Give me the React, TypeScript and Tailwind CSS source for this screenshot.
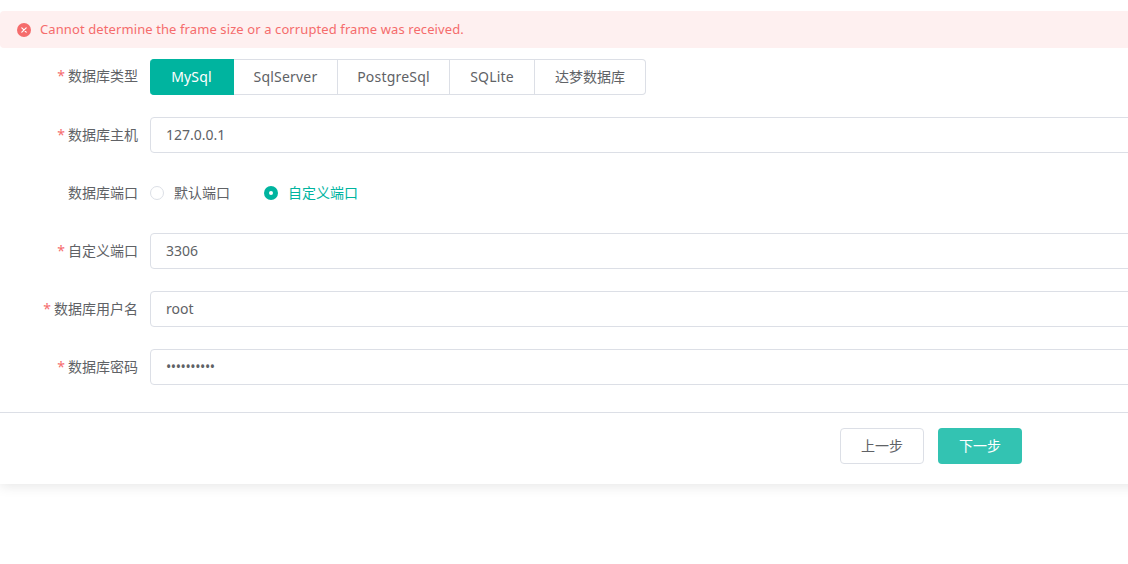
import { useState } from "react"

const font = "font-['Noto_Sans','Noto_Sans_CJK_SC',sans-serif]"
const dbTypes = [
  { name: "MySql", width: "w-[84px]" },
  { name: "SqlServer", width: "w-[104px]" },
  { name: "PostgreSql", width: "w-[112px]" },
  { name: "SQLite", width: "w-[85px]" },
  { name: "达梦数据库", width: "w-[111px]" },
]

const Field = ({ label, required = true, labelClass = "", children }: { label: string; required?: boolean; labelClass?: string; children: React.ReactNode }) => (
  <div className="flex items-center h-9 mb-[22px]">
    <label className={`w-[138px] shrink-0 text-right text-sm text-[#606266] ${labelClass}`}>
      {required && <span className="text-[#f56c6c] mr-[3px]">*</span>}
      {label}
    </label>
    <div className="flex-1 ml-3 flex items-center">{children}</div>
  </div>
)

const TextInput = ({ value, type = "text" }: { value: string; type?: string }) => (
  <input
    type={type}
    defaultValue={value}
    className={`w-full h-9 px-[15px] pb-px text-sm text-[#606266] bg-white border border-[#dcdfe6] rounded outline-none ${type === "password" ? "tracking-[-0.4px]" : ""}`}
  />
)

const App = () => {
  const [dbType, setDbType] = useState("MySql")

  return (
    <div className={`w-[1128px] h-[564px] overflow-hidden bg-white ${font}`}>
      <div className="w-[1300px] pt-[11px] h-[484px] bg-white shadow-[0_2px_12px_0_rgba(0,0,0,0.1)]">
        {/* Error alert */}
        <div className="flex items-center h-[37px] pl-4 bg-[#fef0f0] rounded mb-[11px]">
          <svg viewBox="0 0 16 16" className="w-4 h-4 shrink-0">
            <circle cx="8" cy="8" r="7" fill="#f56c6c" />
            <path d="M5.8 5.8l4.4 4.4M10.2 5.8l-4.4 4.4" stroke="#fff" strokeWidth="1.2" strokeLinecap="round" />
          </svg>
          <span className="ml-2 text-[13px] tracking-[0.1px] text-[#f56c6c]">Cannot determine the frame size or a corrupted frame was received.</span>
        </div>

        {/* Form */}
        <Field label="数据库类型" labelClass="pb-0.5">
          <div className="flex">
            {dbTypes.map((t, i) => (
              <button
                key={t.name}
                onClick={() => setDbType(t.name)}
                className={`${t.width} h-9 text-sm tracking-[0.2px] border border-l-0 ${i === 0 ? "rounded-l border-l" : ""} ${i === dbTypes.length - 1 ? "rounded-r tracking-normal" : ""} ${dbType === t.name ? "bg-[#00b49f] border-[#00b49f] text-white" : "bg-white border-[#dcdfe6] text-[#606266]"}`}
              >
                {t.name}
              </button>
            ))}
          </div>
        </Field>
        <Field label="数据库主机">
          <TextInput value="127.0.0.1" />
        </Field>
        <Field label="数据库端口" required={false}>
          <div className="flex items-center text-sm">
            <span className="w-3.5 h-3.5 rounded-full border border-[#dcdfe6] bg-white" />
            <span className="ml-2.5 text-[#606266]">默认端口</span>
            <span className="ml-[34px] w-3.5 h-3.5 rounded-full bg-[#00b49f] flex items-center justify-center">
              <span className="w-1 h-1 rounded-full bg-white" />
            </span>
            <span className="ml-2.5 text-[#00b49f]">自定义端口</span>
          </div>
        </Field>
        <Field label="自定义端口">
          <TextInput value="3306" />
        </Field>
        <Field label="数据库用户名">
          <TextInput value="root" />
        </Field>
        <Field label="数据库密码">
          <TextInput value="1234567890" type="password" />
        </Field>

        {/* Footer */}
        <div className="mt-[27px] border-t border-[#dcdfe6] pt-[15px] pl-[840px] flex gap-3.5">
          <button className="w-[84px] h-9 text-sm text-[#606266] bg-white border border-[#dcdfe6] rounded">上一步</button>
          <button className="w-[84px] h-9 text-sm text-white bg-[#33c3b2] rounded">下一步</button>
        </div>
      </div>
    </div>
  )
}

export default App
